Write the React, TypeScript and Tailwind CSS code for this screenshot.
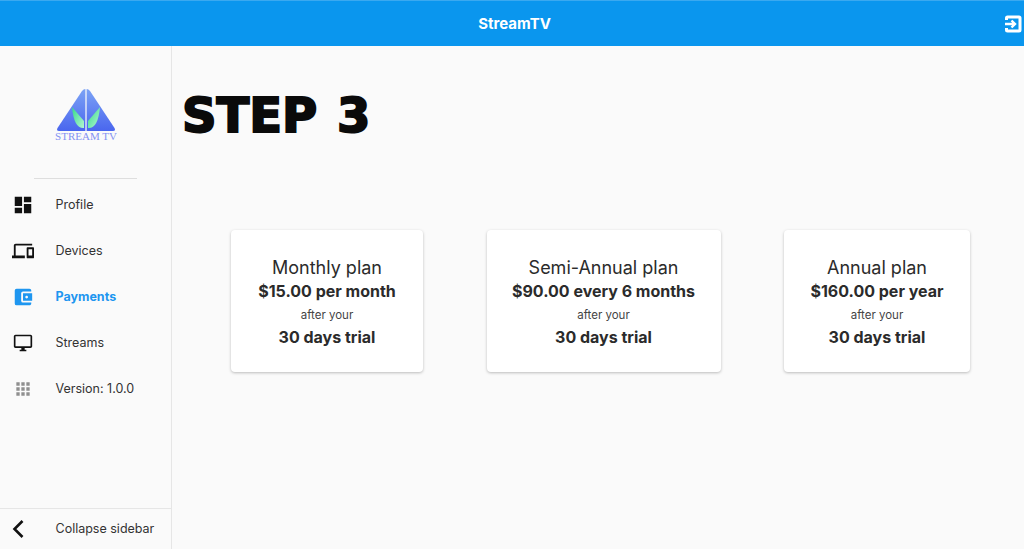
import {
  MdAccountBalanceWallet,
  MdApps,
  MdDashboard,
  MdDevices,
  MdOutlineDesktopWindows,
} from "react-icons/md";
import type { ReactNode } from "react";

const navItems: { label: string; icon: ReactNode; active?: boolean }[] = [
  { label: "Profile", icon: <MdDashboard className="h-[22px] w-[22px] text-[#111]" /> },
  { label: "Devices", icon: <MdDevices className="h-[22px] w-[22px] text-[#111]" /> },
  {
    label: "Payments",
    icon: <MdAccountBalanceWallet className="h-[22px] w-[22px] text-[#1e96f0]" />,
    active: true,
  },
  {
    label: "Streams",
    icon: <MdOutlineDesktopWindows className="ml-px h-[20px] w-[20px] text-[#111]" />,
  },
  { label: "Version: 1.0.0", icon: <MdApps className="ml-px h-[20px] w-[20px] text-[#8f8f8f]" /> },
];

const plans = [
  { name: "Monthly plan", price: "$15.00 per month", width: "w-[192px]" },
  { name: "Semi-Annual plan", price: "$90.00 every 6 months", width: "w-[234px]" },
  { name: "Annual plan", price: "$160.00 per year", width: "w-[186px]" },
];

function Logo() {
  return (
    <svg width="62" height="54" viewBox="0 0 62 54" className="block">
      <defs>
        <linearGradient id="tri" x1="0" y1="0" x2="0" y2="1">
          <stop offset="0" stopColor="#7ba2f5" />
          <stop offset="1" stopColor="#4a66ee" />
        </linearGradient>
        <linearGradient id="leaf" x1="0" y1="0" x2="1" y2="1">
          <stop offset="0" stopColor="#35d98a" />
          <stop offset="1" stopColor="#b4f7d0" />
        </linearGradient>
      </defs>
      <path d="M30.4 1 L30.4 43 L4 43 Q1 43 2.5 40 L27 3 Q28.5 1 30.4 1 Z" fill="url(#tri)" />
      <path d="M31.6 1 L31.6 43 L58 43 Q61 43 59.5 40 L35 3 Q33.5 1 31.6 1 Z" fill="url(#tri)" />
      <path d="M17 19 L29 33 L29 40 Q19 41 17 19 Z" fill="url(#leaf)" />
      <path d="M45 19 L33 33 L33 40 Q43 41 45 19 Z" fill="url(#leaf)" />
      <text
        x="31"
        y="52"
        textAnchor="middle"
        fontFamily="'Liberation Serif', serif"
        fontSize="11"
        fill="#8492f2"
      >
        STREAM TV
      </text>
    </svg>
  );
}

function PlanCard({ name, price, width }: { name: string; price: string; width: string }) {
  return (
    <div
      className={`flex h-[142px] ${width} flex-col items-center rounded bg-white pt-[27px] text-center text-[#2b2b2b] shadow-[0_1px_3px_rgba(0,0,0,0.25)]`}
    >
      <div className="text-[18px] leading-[22px]">{name}</div>
      <div className="text-[16px] font-bold leading-[24px]">{price}</div>
      <div className="mt-[2px] text-[11.5px] leading-[20px] text-[#444]">after your</div>
      <div className="text-[16px] font-bold leading-[24px]">30 days trial</div>
    </div>
  );
}

export default function App() {
  return (
    <div className="flex h-[549px] w-[1024px] flex-col overflow-hidden bg-[#fafafa] font-['Inter',sans-serif]">
      <header className="relative flex h-[46px] shrink-0 items-center justify-center border-t border-[#3aa9f0] bg-[#0a96ee] pl-[5px] pt-[1px] text-[15px] font-bold text-white">
        StreamTV
        <svg
          width="18"
          height="18"
          viewBox="0 0 18 18"
          className="absolute right-[2px] top-[14px]"
          fill="none"
        >
          <path
            d="M2.5 5 V3 Q2.5 2 3.5 2 H15 Q16 2 16 3 V15 Q16 16 15 16 H3.5 Q2.5 16 2.5 15 V13"
            stroke="white"
            strokeWidth="3"
          />
          <path d="M1 9 H10 M7.5 5.5 L11 9 L7.5 12.5" stroke="white" strokeWidth="2.4" />
        </svg>
      </header>
      <div className="flex min-h-0 flex-1">
        <aside className="flex w-[172px] shrink-0 flex-col border-r border-[#e6e6e6]">
          <div className="flex h-[132px] justify-center pt-[42px]">
            <Logo />
          </div>
          <div className="mx-[34px] h-px bg-[#dedede]" />
          <nav className="flex-1 pt-[3px]">
            {navItems.map((item) => (
              <div key={item.label} className="flex h-[46px] items-center pl-[12px]">
                <span className="flex w-[43.5px] shrink-0">{item.icon}</span>
                <span
                  className={
                    item.active
                      ? "text-[12.5px] font-bold text-[#1e96f0]"
                      : "text-[12.5px] text-[#333]"
                  }
                >
                  {item.label}
                </span>
              </div>
            ))}
          </nav>
          <div className="flex h-[41px] items-center border-t border-[#e6e6e6] pl-[7px]">
            <span className="flex w-[48.5px] shrink-0">
              <svg width="22" height="22" viewBox="0 0 22 22" fill="none" stroke="#111" strokeWidth="2.6">
                <path d="M15.5 3 L7.5 11 L15.5 19" />
              </svg>
            </span>
            <span className="text-[12.5px] text-[#333]">Collapse sidebar</span>
          </div>
        </aside>
        <main className="min-w-0 flex-1">
          <h1 className="pl-[10px] pt-[40px] font-['DejaVu_Sans',sans-serif] text-[48px] font-bold leading-[58px] text-[#0a0a0a] [-webkit-text-stroke:2px_#0a0a0a] [word-spacing:3px]">
            STEP 3
          </h1>
          <div className="mt-[86px] flex pl-[59px]">
            {plans.map((plan, i) => (
              <div key={plan.name} className={i === 1 ? "mx-[63.5px]" : ""}>
                <PlanCard {...plan} />
              </div>
            ))}
          </div>
        </main>
      </div>
    </div>
  );
}
